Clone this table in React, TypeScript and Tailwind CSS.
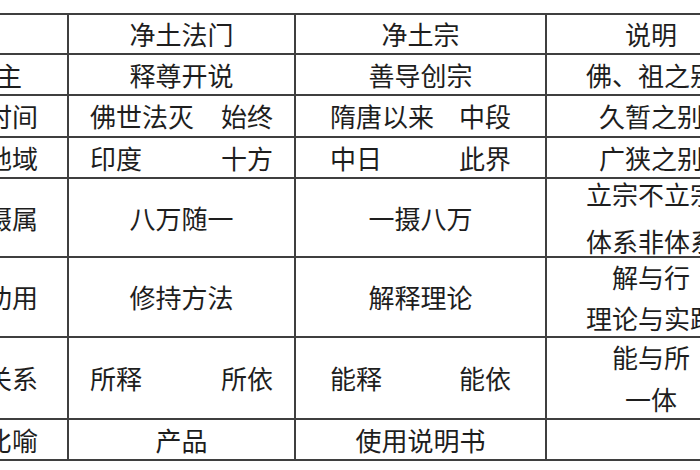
const rows: {
    label: string;
    labelClass?: string;
    h: string;
    a: string[];
    b: string[];
    note: string[];
    noteGap?: string;
}[] = [
    { label: "教主", labelClass: "pr-[32px]", h: "h-[41px]", a: ["释尊开说"], b: ["善导创宗"], note: ["佛、祖之别"] },
    { label: "时间", h: "h-[42px]", a: ["佛世法灭", "始终"], b: ["隋唐以来", "中段"], note: ["久暂之别"] },
    { label: "地域", h: "h-[41px]", a: ["印度", "十方"], b: ["中日", "此界"], note: ["广狭之别"] },
    { label: "摄属", h: "h-[79px]", a: ["八万随一"], b: ["一摄八万"], note: ["立宗不立宗", "体系非体系"], noteGap: "gap-[21px]" },
    { label: "功用", h: "h-[80px]", a: ["修持方法"], b: ["解释理论"], note: ["解与行", "理论与实践"], noteGap: "gap-[15px]" },
    { label: "关系", h: "h-[82px]", a: ["所释", "所依"], b: ["能释", "能依"], note: ["能与所", "一体"], noteGap: "gap-[16px]" },
    { label: "比喻", h: "h-[41px]", a: ["产品"], b: ["使用说明书"], note: [""] },
];

const cell = "border-2 border-[#3f3f3f] p-0 align-middle";

function Pair({ items, pad }: { items: string[]; pad: string }) {
    if (items.length === 1) {
        return <div className="text-center">{items[0]}</div>;
    }
    return (
        <div className={`flex justify-between ${pad}`}>
            <span>{items[0]}</span>
            <span>{items[1]}</span>
        </div>
    );
}

export default function App() {
    return (
        <div
            className="w-[700px] h-[470px] overflow-hidden bg-white text-[#1e1e1e] text-[26px] leading-none"
            style={{ fontFamily: '"Noto Sans CJK SC", "Noto Sans", sans-serif' }}
        >
            <table className="table-fixed border-collapse mt-[13px] -ml-[45px] w-[800px]">
                <colgroup>
                    <col className="w-[112px]" />
                    <col className="w-[227px]" />
                    <col className="w-[251px]" />
                    <col className="w-[210px]" />
                </colgroup>
                <thead>
                    <tr className="h-[40px]">
                        <th className={`${cell} font-normal`}></th>
                        <th className={`${cell} font-normal text-center`}>净土法门</th>
                        <th className={`${cell} font-normal text-center`}>净土宗</th>
                        <th className={`${cell} font-normal text-center`}>说明</th>
                    </tr>
                </thead>
                <tbody>
                    {rows.map((row) => (
                        <tr key={row.label} className={row.h}>
                            <td className={`${cell} text-center ${row.labelClass ?? ""}`}>{row.label}</td>
                            <td className={cell}>
                                <Pair items={row.a} pad="px-[21px]" />
                            </td>
                            <td className={cell}>
                                <Pair items={row.b} pad="px-[34px]" />
                            </td>
                            <td className={`${cell} text-center`}>
                                {row.note.length > 1 ? (
                                    <div className={`flex flex-col items-center ${row.noteGap ?? ""}`}>
                                        {row.note.map((n) => (
                                            <span key={n} className="whitespace-nowrap">{n}</span>
                                        ))}
                                    </div>
                                ) : (
                                    <span className="whitespace-nowrap">{row.note[0]}</span>
                                )}
                            </td>
                        </tr>
                    ))}
                </tbody>
            </table>
        </div>
    );
}
